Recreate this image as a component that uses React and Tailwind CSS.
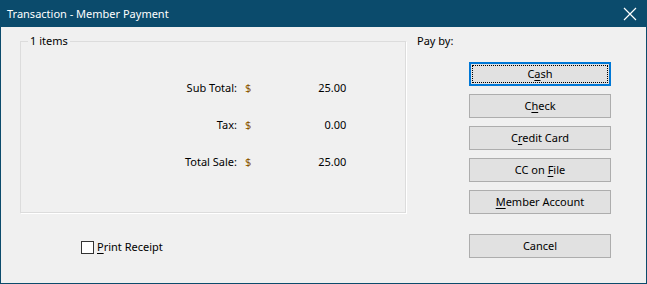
import React from "react";

const U = ({ children }) => <span className="underline underline-offset-[2px]">{children}</span>;

function Btn({ children, focused }) {
  return (
    <div
      className={
        "h-[24px] w-[142px] bg-[#e1e1e1] flex items-center justify-center text-black " +
        (focused ? "border-2 border-[#0078d7] p-[1px]" : "border border-[#adadad]")
      }
    >
      {focused ? (
        <div className="w-full h-full border border-dotted border-black flex items-center justify-center">
          {children}
        </div>
      ) : (
        children
      )}
    </div>
  );
}

function Row({ label, value }) {
  return (
    <div className="flex h-[16px] items-center">
      <div className="w-[216px] text-right">{label}</div>
      <div className="ml-[8px] text-[#8a5600]">$</div>
      <div className="w-[95px] text-right">{value}</div>
    </div>
  );
}

export default function App() {
  return (
    <div
      className="w-[647px] h-[284px] bg-[#f0f0f0] flex flex-col border border-t-0 border-[#0b4b6c] text-[11px] leading-[16px] text-black"
      style={{ fontFamily: '"Noto Sans", "Open Sans", sans-serif' }}
    >
      <div className="h-[27px] shrink-0 bg-[#0b4b6c] flex items-center justify-between pl-[6px] pr-[9px] text-white text-[11px]">
        <span>Transaction - Member Payment</span>
        <svg width="14" height="14" viewBox="0 0 14 14">
          <path d="M1 1 L13 13 M13 1 L1 13" stroke="white" strokeWidth="1.2" />
        </svg>
      </div>
      <div className="flex flex-1">
        <div className="pl-[19px] pt-[14px] flex flex-col">
          <div className="relative w-[386px] h-[172px] border border-[#dcdcdc] shadow-[1px_1px_0_#ffffff] pt-[38px]">
            <span className="absolute left-[7px] top-[-9px] bg-[#f0f0f0] px-[2px]">1 items</span>
            <div className="flex flex-col gap-[21px]">
              <Row label="Sub Total:" value="25.00" />
              <Row label="Tax:" value="0.00" />
              <Row label="Total Sale:" value="25.00" />
            </div>
          </div>
          <div className="mt-[26px] ml-[61px] flex items-center">
            <div className="w-[13px] h-[13px] border border-[#333333] bg-white" />
            <span className="ml-[3px]">
              <U>P</U>rint Receipt
            </span>
          </div>
        </div>
        <div className="ml-[11px] pt-[6px] flex flex-col">
          <div>Pay by:</div>
          <div className="ml-[52px] mt-[13px] flex flex-col gap-[8px]">
            <Btn focused>
              <span>
                C<U>a</U>sh
              </span>
            </Btn>
            <Btn>
              <span>
                C<U>h</U>eck
              </span>
            </Btn>
            <Btn>
              <span>
                C<U>r</U>edit Card
              </span>
            </Btn>
            <Btn>
              <span>
                CC on <U>F</U>ile
              </span>
            </Btn>
            <Btn>
              <span>
                <U>M</U>ember Account
              </span>
            </Btn>
            <div className="mt-[12px]">
              <Btn>Cancel</Btn>
            </div>
          </div>
        </div>
      </div>
    </div>
  );
}
